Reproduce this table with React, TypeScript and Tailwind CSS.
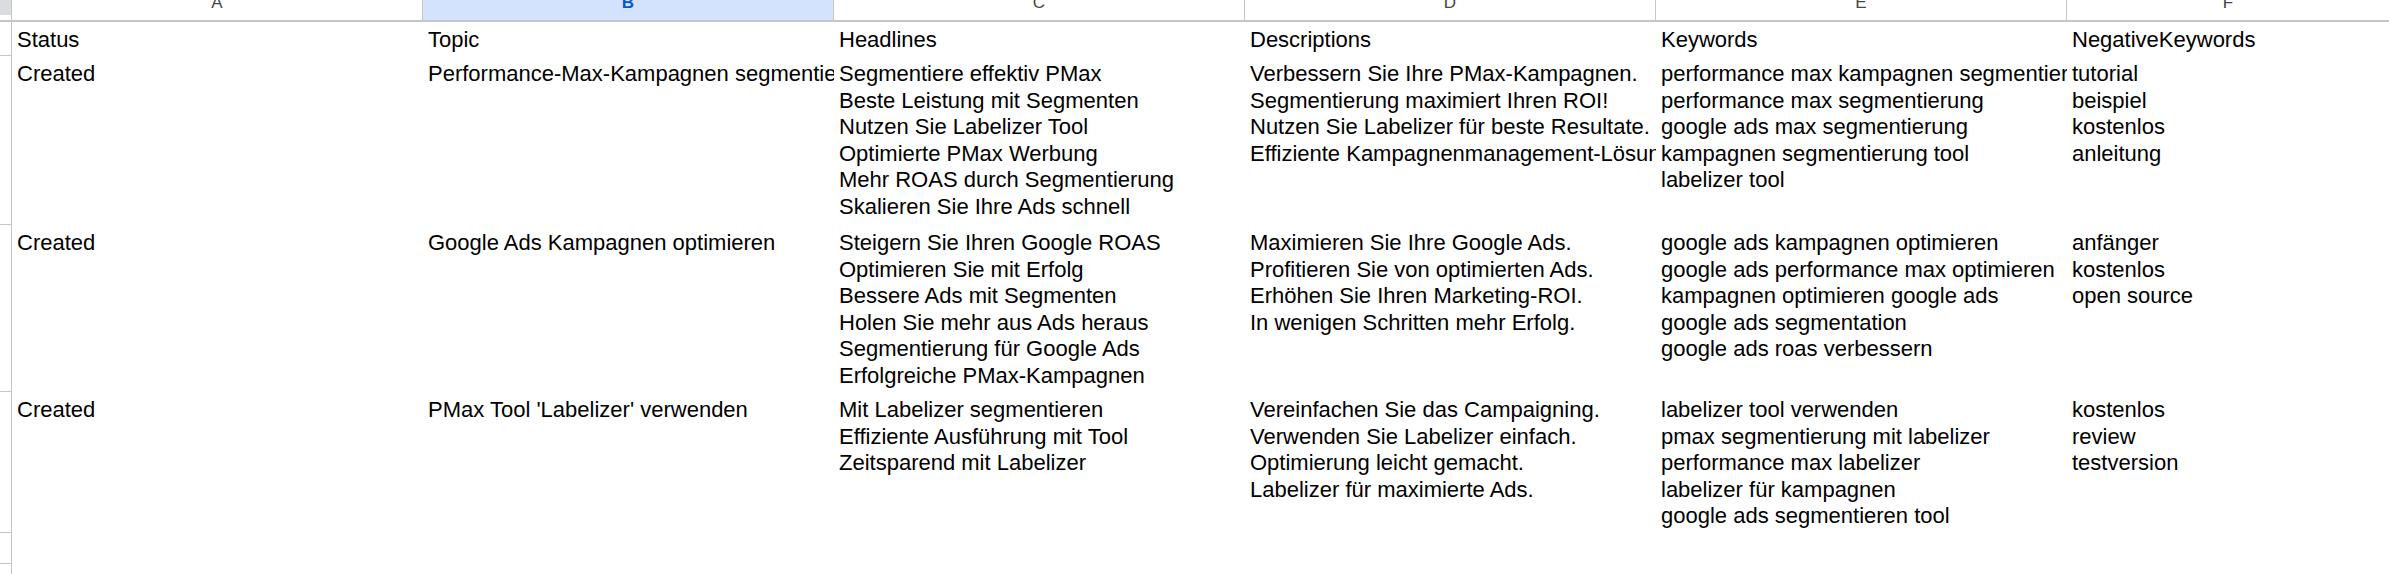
import React from "react";

type Row = { h: number; cells: string[][] };

const header = ["Status", "Topic", "Headlines", "Descriptions", "Keywords", "NegativeKeywords"];

const rows: Row[] = [
  {
    h: 169,
    cells: [
      ["Created"],
      ["Performance-Max-Kampagnen segmentieren"],
      [
        "Segmentiere effektiv PMax",
        "Beste Leistung mit Segmenten",
        "Nutzen Sie Labelizer Tool",
        "Optimierte PMax Werbung",
        "Mehr ROAS durch Segmentierung",
        "Skalieren Sie Ihre Ads schnell",
      ],
      [
        "Verbessern Sie Ihre PMax-Kampagnen.",
        "Segmentierung maximiert Ihren ROI!",
        "Nutzen Sie Labelizer für beste Resultate.",
        "Effiziente Kampagnenmanagement-Lösung",
      ],
      [
        "performance max kampagnen segmentierung",
        "performance max segmentierung",
        "google ads max segmentierung",
        "kampagnen segmentierung tool",
        "labelizer tool",
      ],
      ["tutorial", "beispiel", "kostenlos", "anleitung"],
    ],
  },
  {
    h: 167,
    cells: [
      ["Created"],
      ["Google Ads Kampagnen optimieren"],
      [
        "Steigern Sie Ihren Google ROAS",
        "Optimieren Sie mit Erfolg",
        "Bessere Ads mit Segmenten",
        "Holen Sie mehr aus Ads heraus",
        "Segmentierung für Google Ads",
        "Erfolgreiche PMax-Kampagnen",
      ],
      [
        "Maximieren Sie Ihre Google Ads.",
        "Profitieren Sie von optimierten Ads.",
        "Erhöhen Sie Ihren Marketing-ROI.",
        "In wenigen Schritten mehr Erfolg.",
      ],
      [
        "google ads kampagnen optimieren",
        "google ads performance max optimieren",
        "kampagnen optimieren google ads",
        "google ads segmentation",
        "google ads roas verbessern",
      ],
      ["anfänger", "kostenlos", "open source"],
    ],
  },
  {
    h: 141,
    cells: [
      ["Created"],
      ["PMax Tool 'Labelizer' verwenden"],
      ["Mit Labelizer segmentieren", "Effiziente Ausführung mit Tool", "Zeitsparend mit Labelizer"],
      [
        "Vereinfachen Sie das Campaigning.",
        "Verwenden Sie Labelizer einfach.",
        "Optimierung leicht gemacht.",
        "Labelizer für maximierte Ads.",
      ],
      [
        "labelizer tool verwenden",
        "pmax segmentierung mit labelizer",
        "performance max labelizer",
        "labelizer für kampagnen",
        "google ads segmentieren tool",
      ],
      ["kostenlos", "review", "testversion"],
    ],
  },
  { h: 31, cells: [[], [], [], [], [], []] },
  { h: 31, cells: [[], [], [], [], [], []] },
];

const letters = ["A", "B", "C", "D", "E", "F"];

function Cell({ lines, last }: { lines: string[]; last?: boolean }) {
  return (
    <div
      className={
        (last ? "flex-1 " : "w-[411px] shrink-0 ") +
        "overflow-hidden whitespace-pre pl-[5px] pt-[5px] text-[22px] leading-[26.5px] text-[#000000]"
      }
    >
      {lines.map((l, i) => (
        <div key={i}>{l}</div>
      ))}
    </div>
  );
}

export default function App() {
  return (
    <div className="w-[2389px] h-[574px] overflow-hidden bg-white font-['Liberation_Sans',Arial,sans-serif]">
      {/* column header */}
      <div className="flex h-[22px] border-b-2 border-[#c4c7c5]">
        <div className="w-[12px] shrink-0 border-r border-[#c4c7c5] bg-white">
          <div className="h-[15px] bg-[#dadce0]" />
        </div>
        {letters.map((l, i) => (
          <div
            key={l}
            className={
              (i === 5 ? "flex-1 " : "w-[411px] shrink-0 border-r border-[#c4c7c5] ") +
              (i === 1 ? "bg-[#d3e3fd] text-[#0b57d0] font-bold " : "bg-white text-[#444746] ") +
              "relative overflow-hidden"
            }
          >
            <span className="absolute left-0 right-0 text-center top-[-6px] text-[17px] leading-[17px]">
              {l}
            </span>
          </div>
        ))}
      </div>
      {/* header data row */}
      <div className="flex h-[34px]">
        <div className="w-[12px] shrink-0 border-r border-b border-[#c4c7c5]" />
        {header.map((h, i) => (
          <Cell key={i} lines={[h]} last={i === 5} />
        ))}
      </div>
      {rows.map((r, ri) => (
        <div key={ri} className="flex" style={{ height: r.h }}>
          <div className="w-[12px] shrink-0 border-r border-b border-[#c4c7c5]" />
          {r.cells.map((c, i) => (
            <Cell key={i} lines={c} last={i === 5} />
          ))}
        </div>
      ))}
    </div>
  );
}
